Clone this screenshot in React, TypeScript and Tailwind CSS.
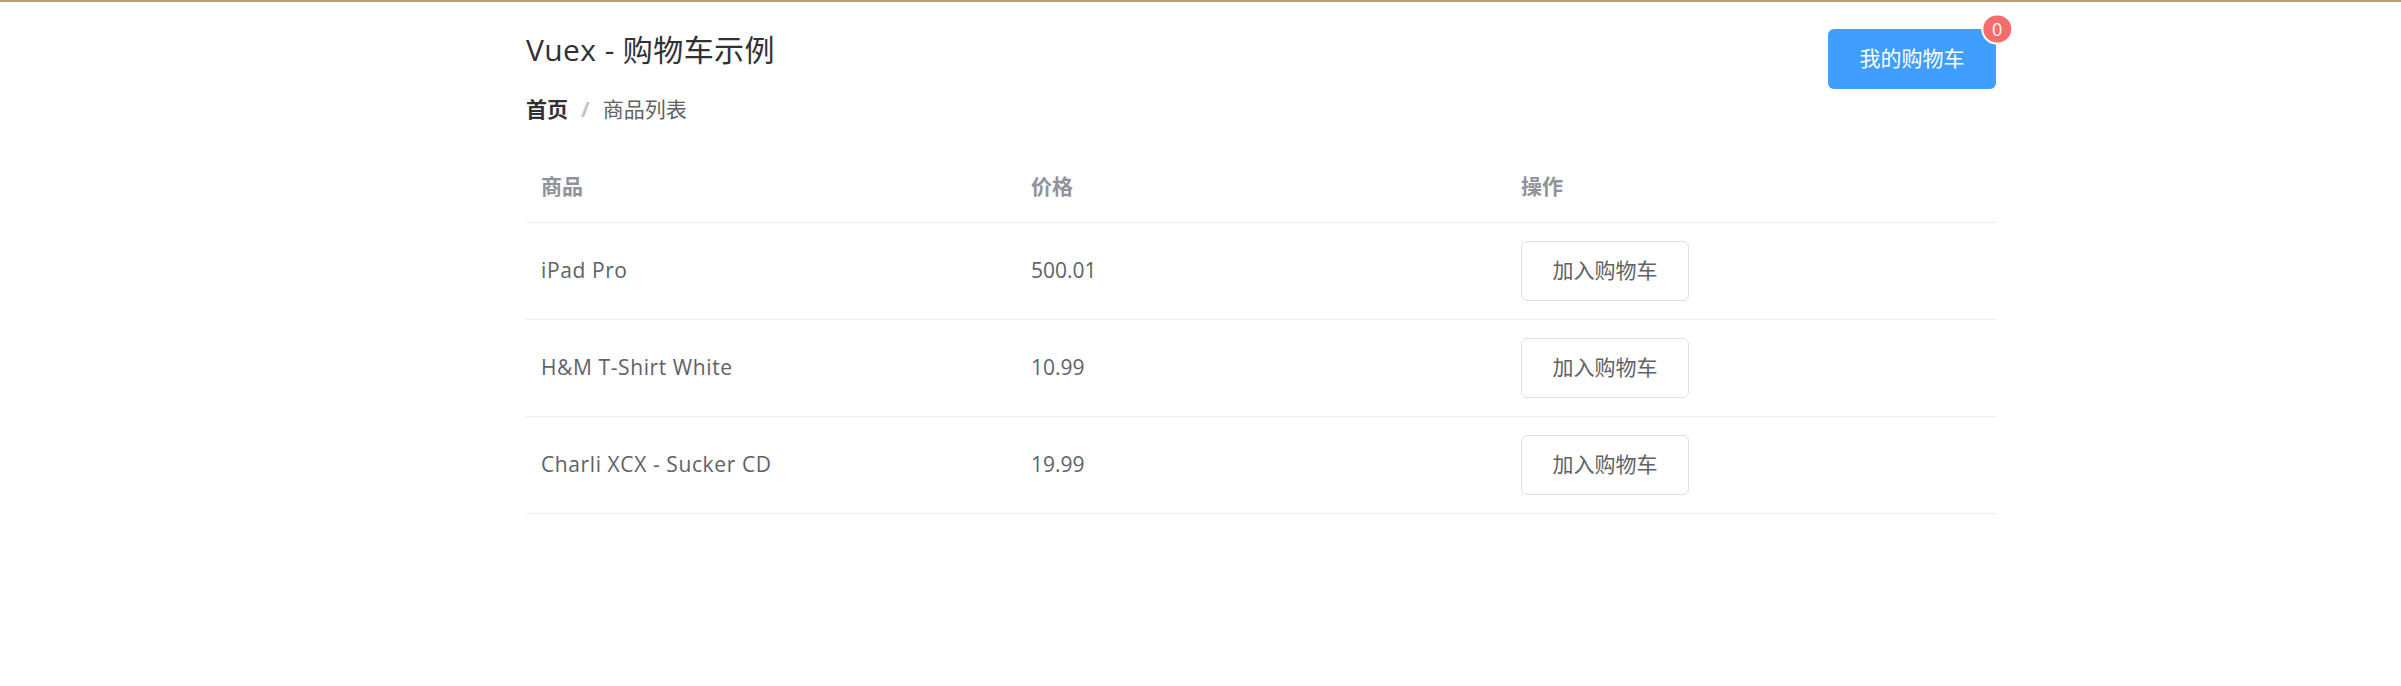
import React from 'react';

const products = [
  { id: 1, title: 'iPad Pro', price: 500.01 },
  { id: 2, title: 'H&M T-Shirt White', price: 10.99 },
  { id: 3, title: 'Charli XCX - Sucker CD', price: 19.99 },
];

const font = { fontFamily: '"Open Sans", "Noto Sans CJK SC", sans-serif' };

export default function App() {
  const cartCount = 0;

  return (
    <div className="min-h-[686px] bg-white border-t-2 border-[#b59e73]" style={font}>
      <div className="ml-[526px] w-[1470px] pt-[27px]">
        {/* Header */}
        <div className="flex justify-between items-start">
          <div>
            <h2 className="text-[30px] leading-[42px] text-[#303133] font-normal tracking-[0.4px]">Vuex - 购物车示例</h2>
            <div className="mt-[28px] flex items-center text-[21px] leading-[21px]">
              <span className="font-bold text-[#303133]">首页</span>
              <span className="mx-[13px] text-[#C0C4CC] font-bold">/</span>
              <span className="text-[#606266]">商品列表</span>
            </div>
          </div>
          <div className="relative">
            <button className="w-[168px] h-[60px] rounded-[6px] bg-[#409EFF] text-white text-[21px]">
              我的购物车
            </button>
            <span className="absolute top-0 right-[15px] -translate-y-1/2 translate-x-full h-[31px] min-w-[31px] px-[9px] rounded-full bg-[#F56C6C] border-2 border-white text-white text-[18px] leading-[27px] text-center">
              {cartCount}
            </span>
          </div>
        </div>

        {/* Product table */}
        <table className="mt-[31px] w-full table-fixed border-collapse">
          <thead>
            <tr className="border-b border-[#EBEEF5]">
              <th className="px-[15px] py-[18px] leading-[35px] text-left text-[21px] font-bold text-[#909399]">商品</th>
              <th className="px-[15px] py-[18px] leading-[35px] text-left text-[21px] font-bold text-[#909399]">价格</th>
              <th className="px-[15px] py-[18px] leading-[35px] text-left text-[21px] font-bold text-[#909399]">操作</th>
            </tr>
          </thead>
          <tbody>
            {products.map((p) => (
              <tr key={p.id} className="border-b border-[#EBEEF5]">
                <td className="px-[15px] py-[18px] text-[21px] text-[#606266] tracking-[0.6px]">{p.title}</td>
                <td className="px-[15px] py-[18px] text-[21px] text-[#606266]">{p.price}</td>
                <td className="px-[15px] py-[18px]">
                  <button className="w-[168px] h-[60px] rounded-[6px] border border-[#DCDFE6] bg-white text-[21px] text-[#606266]">
                    加入购物车
                  </button>
                </td>
              </tr>
            ))}
          </tbody>
        </table>
      </div>
    </div>
  );
}
